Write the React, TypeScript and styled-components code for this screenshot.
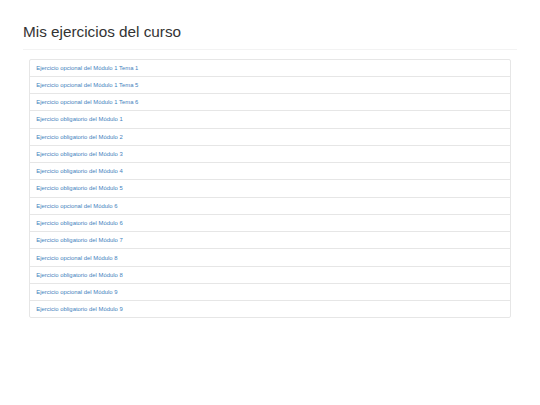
import React from 'react';
import styled, { createGlobalStyle } from 'styled-components';

const GlobalStyle = createGlobalStyle`
  body {
    margin: 0;
    background: #ffffff;
    font-family: "Liberation Sans", Arial, sans-serif;
    color: #333333;
  }
`;

const Page = styled.div`
  padding: 20px 23px 0 23px;
  width: 494px;
`;

const Header = styled.div`
  border-bottom: 1px solid #f3f3f3;
  padding-bottom: 5px;
  margin-bottom: 8.5px;
`;

const Title = styled.h1`
  margin: 0;
  font-size: 15.3px;
  font-weight: 400;
  line-height: 24px;
  color: #333333;
`;

const List = styled.ul`
  list-style: none;
  margin: 0 6.5px 0 6px;
  padding: 0;
  border: 1px solid #e6e6e6;
  border-radius: 2px;
`;

const Item = styled.li`
  height: 16.27px;
  display: flex;
  align-items: center;
  padding: 0 6.3px;
  font-size: 5.9px;
  & + & {
    border-top: 1px solid #e6e6e6;
  }
`;

const ItemLink = styled.a`
  color: #3f82bd;
  text-decoration: none;
`;

const exercises = [
  'Ejercicio opcional del Módulo 1 Tema 1',
  'Ejercicio opcional del Módulo 1 Tema 5',
  'Ejercicio opcional del Módulo 1 Tema 6',
  'Ejercicio obligatorio del Módulo 1',
  'Ejercicio obligatorio del Módulo 2',
  'Ejercicio obligatorio del Módulo 3',
  'Ejercicio obligatorio del Módulo 4',
  'Ejercicio obligatorio del Módulo 5',
  'Ejercicio opcional del Módulo 6',
  'Ejercicio obligatorio del Módulo 6',
  'Ejercicio obligatorio del Módulo 7',
  'Ejercicio opcional del Módulo 8',
  'Ejercicio obligatorio del Módulo 8',
  'Ejercicio opcional del Módulo 9',
  'Ejercicio obligatorio del Módulo 9',
];

export default function App() {
  return (
    <>
      <GlobalStyle />
      <Page>
        <Header>
          <Title>Mis ejercicios del curso</Title>
        </Header>
        <List>
          {exercises.map((name) => (
            <Item key={name}>
              <ItemLink href="#">{name}</ItemLink>
            </Item>
          ))}
        </List>
      </Page>
    </>
  );
}
